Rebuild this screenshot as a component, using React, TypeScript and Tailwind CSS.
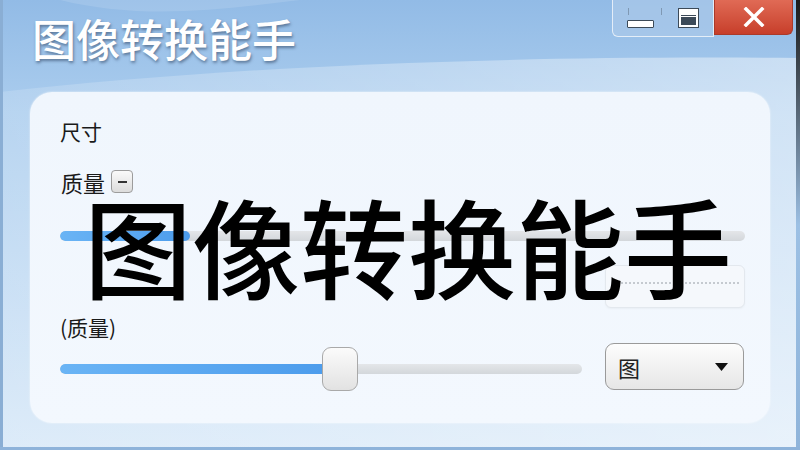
import React from 'react';

const cjk = '"Noto Sans CJK SC", "Noto Sans", sans-serif';

function WindowBackdrop() {
  // decorative aero wave behind the title
  return (
    <svg
      className="absolute inset-0 pointer-events-none"
      width="800"
      height="450"
      viewBox="0 0 800 450"
    >
      <defs>
        <linearGradient id="bg" x1="0" y1="0" x2="0" y2="1">
          <stop offset="0" stopColor="#92bbe6" />
          <stop offset="0.25" stopColor="#abcdee" />
          <stop offset="1" stopColor="#d7e8f8" />
        </linearGradient>
        <linearGradient id="wave" x1="0" y1="0" x2="1" y2="0">
          <stop offset="0" stopColor="#ffffff" stopOpacity="0.15" />
          <stop offset="1" stopColor="#ffffff" stopOpacity="0.45" />
        </linearGradient>
      </defs>
      <rect width="800" height="450" fill="url(#bg)" />
      <path d="M0 92 C 200 70, 450 55, 800 58 L 800 450 L 0 450 Z" fill="url(#wave)" />
      <path d="M60 0 C 140 20, 220 10, 300 0 Z" fill="#ffffff" fillOpacity="0.12" />
    </svg>
  );
}

function TitleButtons() {
  return (
    <div className="absolute top-0 right-[7px] flex">
      <div className="flex h-[37px] w-[102px] rounded-bl-[6px] border border-t-0 border-white/70 bg-[#a7c7e8]/80">
        <div className="relative flex w-[54px] items-end justify-center pb-[8px]">
          <div className="absolute left-[15px] top-[8px] h-[7px] w-px bg-[#7f98b3]" />
          <div className="absolute left-[48px] top-[8px] h-[7px] w-px bg-[#7f98b3]" />
          <div className="h-[8px] w-[27px] rounded-[1px] border border-[#3c4a58] bg-white" />
        </div>
        <div className="flex flex-1 items-center justify-center pr-[4px]">
          <div className="h-[20px] w-[21px] border border-[#3c4a58] bg-white p-[2px]">
            <div className="h-[5px] w-full border-b border-[#3c4a58]" />
            <div className="mt-[1px] h-[8px] w-full bg-[#3c4a58]" />
          </div>
        </div>
      </div>
      <div className="flex h-[35px] w-[79px] items-center justify-center rounded-br-[6px] border border-t-0 border-[#ab3a2a] bg-gradient-to-b from-[#e06a55] to-[#c73e2a]">
        <svg width="22" height="20" viewBox="0 0 22 20">
          <path d="M3 2 L19 18 M19 2 L3 18" stroke="#ffffff" strokeWidth="3.5" strokeLinecap="square" />
        </svg>
      </div>
    </div>
  );
}

function Slider({ fill, width, thumb }: { fill: number; width: number; thumb?: boolean }) {
  return (
    <div className="relative flex h-[44px] items-center" style={{ width }}>
      <div className="h-[10px] w-full overflow-hidden rounded-full bg-gradient-to-b from-[#e4e6e9] to-[#d3d7db]">
        <div className="h-full rounded-full bg-gradient-to-r from-[#6ab4f5] to-[#4c9cec]" style={{ width: fill }} />
      </div>
      {thumb && (
        <div
          className="absolute top-0 h-[44px] w-[36px] rounded-[9px] border border-[#a9a9a9] bg-gradient-to-b from-[#fbfbfb] to-[#e2e2e2]"
          style={{ left: fill - 8 }}
        />
      )}
    </div>
  );
}

export default function App() {
  return (
    <div
      className="relative h-[450px] w-[800px] overflow-hidden bg-[#c9def3]"
      style={{ fontFamily: cjk }}
    >
      <WindowBackdrop />
      <div className="absolute left-0 top-0 h-[6px] w-[3px] bg-black" />
      <div className="absolute right-0 top-0 h-full w-[4px] bg-gradient-to-b from-[#1b1b1b] via-[#9cc0e4] to-[#8fb4da]" />
      <div className="absolute left-0 top-0 h-full w-[3px] bg-[#8aaed4]" />
      <div className="absolute bottom-0 left-0 h-[3px] w-full bg-[#8eb3da]" />
      <TitleButtons />

      <div className="relative flex h-full flex-col">
        <div className="flex h-[92px] items-start px-[32px] pt-[16px]">
          <h1
            className="text-[44px] leading-none font-medium text-white"
            style={{ textShadow: '1px 2px 3px rgba(40,60,90,0.55)' }}
          >
            图像转换能手
          </h1>
        </div>

        <div className="mx-[30px] flex h-[331px] w-[740px] flex-col rounded-[22px] bg-gradient-to-b from-[#f0f6fd] to-[#f3f8fe] pl-[30px] pr-[25px] pt-[27px] shadow-[0_0_2px_rgba(255,255,255,0.8)]">
          <div className="text-[21px] leading-[24px] text-[#1a1a1a]">尺寸</div>

          <div className="mt-[27px] flex h-[23px] items-center gap-[6px] pl-[1px]">
            <span className="text-[22px] leading-[24px] text-[#1a1a1a]">质量</span>
            <div className="flex h-[23px] w-[22px] items-center justify-center rounded-[4px] border border-[#9c9c9c] bg-gradient-to-b from-[#fafafa] to-[#dcdcdc]">
              <div className="h-[2px] w-[9px] bg-[#333]" />
            </div>
          </div>

          <div className="mt-[21px]">
            <Slider fill={130} width={685} />
          </div>

          <div className="mt-[7px] flex justify-end">
            <div className="relative h-[43px] w-[140px] rounded-[6px] border border-[#e3e8ee] bg-[#f5f8fc] shadow-[0_1px_2px_rgba(0,0,0,0.04)]">
              <div className="absolute left-[15px] top-[16px] w-[118px] border-t-2 border-dotted border-[#c5cad0]" />
            </div>
          </div>

          <div className="mt-[7px] text-[21px] leading-[24px] text-[#1a1a1a]">(质量)</div>

          <div className="mt-[4px] flex items-start gap-[23px]">
            <div className="mt-[4px]">
              <Slider fill={270} width={522} thumb />
            </div>
            <div className="flex h-[47px] w-[139px] items-center justify-between rounded-[9px] border border-[#9a9a9a] bg-gradient-to-b from-[#fdfdfd] to-[#e6e6e6] pl-[12px] pr-[15px]">
              <span className="text-[22px] leading-none text-[#222]">图</span>
              <svg width="13" height="8" viewBox="0 0 13 8">
                <path d="M0 0 H13 L6.5 8 Z" fill="#111" />
              </svg>
            </div>
          </div>
        </div>
      </div>

      <div className="absolute left-[84px] top-[190px] text-[108px] leading-none font-medium text-black">
        图像转换能手
      </div>
    </div>
  );
}
